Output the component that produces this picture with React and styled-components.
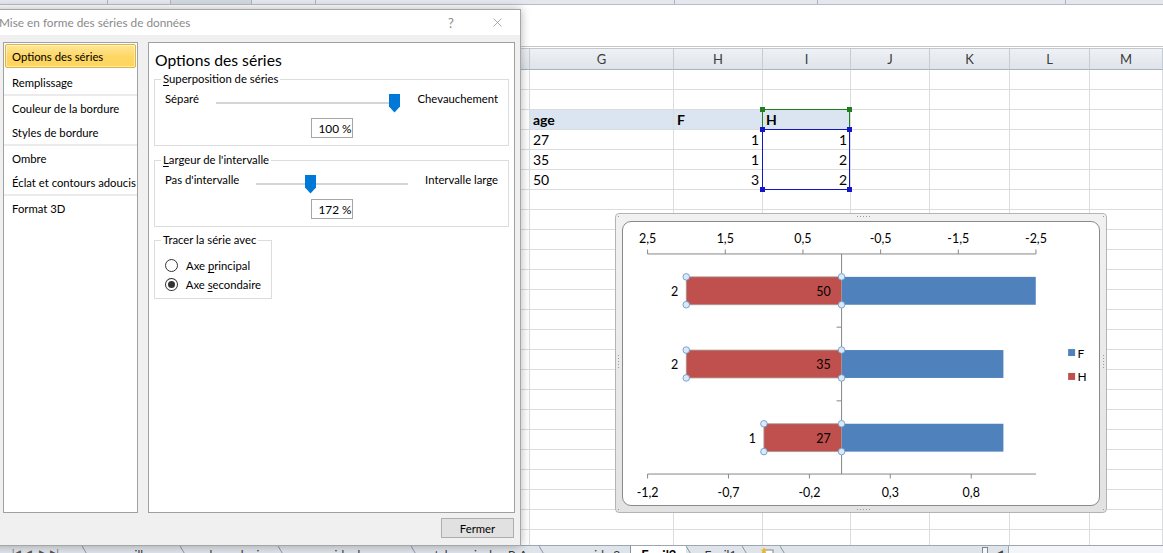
import React from "react";
import styled, { createGlobalStyle } from "styled-components";
import { X } from "lucide-react";

const UI = `Lato, "Noto Sans", sans-serif`;
const SHEET = `Lato, "Liberation Sans", sans-serif`;

const GlobalStyle = createGlobalStyle`
  * { box-sizing: border-box; }
  html, body { margin: 0; padding: 0; background: #fff; }
  body { width: 1163px; height: 553px; overflow: hidden; font-family: ${UI}; }
`;

const Screen = styled.div`
  position: relative;
  width: 1163px;
  height: 553px;
  overflow: hidden;
  background: #fff;
  display: flex;
  flex-direction: column;
`;

/* ---------- Excel window behind ---------- */
const RibbonStrip = styled.div`
  height: 5px;
  flex-shrink: 0;
  display: flex;
  background: #e4e8ed;
  border-bottom: 1px solid #b7bdc6;
`;
const RibbonSeg = styled.div`
  width: ${(p) => p.$w}px;
  flex-shrink: 0;
  border-right: 1px solid #aeb4bd;
  background: ${(p) => p.$bg || "transparent"};
`;
const FormulaBar = styled.div`
  height: 44px;
  flex-shrink: 0;
  background: #fff;
  border-bottom: 3px double #c4c8cd;
`;
const SheetArea = styled.div`
  height: 496px;
  flex-shrink: 0;
  overflow: hidden;
  display: grid;
  grid-template-columns: 530px 144px 89px 88px 79px 80px 80px 1fr;
  grid-template-rows: 21px;
  grid-auto-rows: 20px;
  font-family: ${SHEET};
`;
const HeadCell = styled.div`
  background: linear-gradient(#eef1f5, #dfe4ea);
  border-right: 1px solid #c6ccd4;
  border-bottom: 1px solid #a9b2bd;
  color: #3c3c3c;
  font-size: 13px;
  display: flex;
  align-items: center;
  justify-content: center;
`;
const Cell = styled.div`
  position: relative;
  border-right: 1px solid #dadcdf;
  border-bottom: 1px solid #dadcdf;
  background: ${(p) => (p.$fill ? "#dbe5f1" : "#fff")};
  font-size: 14px;
  font-weight: ${(p) => (p.$bold ? 700 : 400)};
  color: #000;
  display: flex;
  align-items: flex-end;
  justify-content: ${(p) => (p.$right ? "flex-end" : "flex-start")};
  padding: 0 3px 1px 3px;
  line-height: 17px;
`;
const RefBox = styled.div`
  position: absolute;
  left: -1px;
  top: -1px;
  right: 0;
  height: ${(p) => p.$h}px;
  border: 1px solid ${(p) => p.$c};
  z-index: 2;
`;
const RefHandle = styled.span`
  position: absolute;
  width: 5px;
  height: 5px;
  background: ${(p) => p.$c};
  ${(p) => (p.$t ? "top: -3px;" : "bottom: -3px;")}
  ${(p) => (p.$l ? "left: -3px;" : "right: -3px;")}
`;

/* ---------- sheet tabs ---------- */
const TabBar = styled.div`
  height: 20px;
  flex-shrink: 0;
  display: flex;
  align-items: flex-start;
  background: #dfe4ea;
  border-top: 1px solid #9ca6b2;
  font-family: ${UI};
  font-size: 12px;
  color: #333;
`;
const NavArrows = styled.div`
  width: 82px;
  flex-shrink: 0;
  display: flex;
  gap: 4px;
  padding: 1px 0 0 12px;
  font-size: 9px;
  color: #555;
`;
const Slash = styled.div`
  width: 12px;
  height: 20px;
  flex-shrink: 0;
  background: linear-gradient(to top right, transparent 46%, #8793a2 50%, transparent 54%);
`;
const Tab = styled.div`
  flex-shrink: 0;
  padding: 1px ${(p) => p.$px || 12}px 0;
  background: ${(p) => (p.$active ? "#fff" : "transparent")};
  font-weight: ${(p) => (p.$active ? 700 : 400)};
  font-size: ${(p) => (p.$active ? 13 : 12)}px;
  color: ${(p) => (p.$active ? "#000" : "#333")};
  border-left: ${(p) => (p.$active ? "1px solid #8793a2" : "none")};
`;
const TabFiller = styled.div`
  flex: 0 0 ${(p) => p.$w}px;
`;
const Splitter = styled.div`
  width: 6px;
  height: 14px;
  flex-shrink: 0;
  margin-top: 1px;
  border: 1px solid #7d8794;
  background: #f4f6f8;
`;
const ScrollArrow = styled.div`
  width: 20px;
  flex-shrink: 0;
  font-size: 9px;
  color: #444;
  padding: 1px 0 0 8px;
`;
const ScrollTrack = styled.div`
  flex: 1;
  height: 20px;
  background: #f3f5f8;
  border-left: 1px solid #9ca6b2;
  display: flex;
  justify-content: center;
  padding: 1px 0 0 330px;
  font-size: 8px;
  color: #777;
  letter-spacing: -1px;
`;

/* ---------- chart object ---------- */
const ChartObject = styled.div`
  position: absolute;
  left: 615px;
  top: 213px;
  width: 492px;
  height: 300px;
  padding: 7px 6px 6px 6px;
  display: flex;
  background: linear-gradient(#f1f1f1, #e2e2e2);
  border: 1px solid #b4b4b4;
  border-radius: 4px;
  z-index: 3;
`;
const ChartInner = styled.div`
  flex: 1;
  display: flex;
  background: #fff;
  border: 1px solid #8a8a8a;
  border-radius: 9px;
  overflow: hidden;
`;
const Grip = styled.span`
  position: absolute;
  ${(p) => p.$css}
  background: radial-gradient(circle, #9a9a9a 0.8px, transparent 1px);
  background-size: 3px 3px;
`;

/* ---------- dialog ---------- */
const Dialog = styled.div`
  position: absolute;
  left: -8px;
  top: 9px;
  width: 529px;
  height: 537px;
  display: flex;
  flex-direction: column;
  background: #f0f0f0;
  border: 1px solid #a6a6a6;
  box-shadow: 0 0 9px rgba(0, 0, 0, 0.3);
  font-family: ${UI};
  font-size: 11.3px;
  color: #000;
  z-index: 5;
`;
const TitleBar = styled.div`
  height: 25px;
  flex-shrink: 0;
  display: flex;
  align-items: center;
  background: #fff;
  padding-left: 6px;
  color: #8a8a8a;
  font-size: 11.8px;
`;
const TitleText = styled.span`
  flex: 1;
`;
const TitleBtn = styled.div`
  width: 46px;
  height: 25px;
  display: flex;
  align-items: center;
  justify-content: center;
  color: #8a8a8a;
  font-size: 13px;
`;
const Body = styled.div`
  flex-shrink: 0;
  display: grid;
  grid-template-columns: 135px 367px;
  column-gap: 10px;
  height: 478px;
  padding: 7px 5px 0 10px;
`;
const NavPanel = styled.div`
  background: #fff;
  border: 1px solid #a0a0a0;
  padding-top: 1px;
  display: flex;
  flex-direction: column;
`;
const NavGroup = styled.div`
  display: flex;
  flex-direction: column;
  border-bottom: ${(p) => (p.$last ? "none" : "2px solid #ebebeb")};
`;
const NavItem = styled.div`
  height: 24px;
  margin: 0 1px ${(p) => (p.$selected ? "2px" : "0")};
  padding-left: ${(p) => (p.$selected ? "6px" : "7px")};
  display: flex;
  align-items: center;
  white-space: nowrap;
  border: ${(p) => (p.$selected ? "1px solid #e2b13e" : "none")};
  border-radius: 2px;
  background: ${(p) =>
    p.$selected ? "linear-gradient(#fee798, #fdd663 55%, #fcd65f)" : "transparent"};
  box-shadow: ${(p) => (p.$selected ? "inset 0 0 0 1px rgba(255,255,255,0.5)" : "none")};
`;
const OptionsPanel = styled.div`
  background: #fff;
  border: 1px solid #a0a0a0;
  padding: 0 5px 0 5px;
  display: flex;
  flex-direction: column;
  align-items: flex-start;
`;
const Heading = styled.div`
  margin: 6px 0 0 1px;
  font-size: 15.7px;
  line-height: 22px;
`;
const Group = styled.fieldset`
  margin: ${(p) => p.$mt || 0}px 0 0 0;
  width: ${(p) => (p.$w ? `${p.$w}px` : "100%")};
  border: 1px solid #dcdcdc;
  padding: 0 10px ${(p) => p.$pb || 7}px 10px;
  display: flex;
  flex-direction: column;
  min-width: 0;
`;
const Legend = styled.legend`
  padding: 0 2px;
  margin-left: -4px;
  line-height: 16px;
  white-space: nowrap;
`;
const Key = styled.span`
  text-decoration: underline;
  text-underline-offset: 2px;
`;
const SliderRow = styled.div`
  margin-top: 4px;
  height: 16px;
  display: flex;
  align-items: center;
  line-height: 16px;
  white-space: nowrap;
`;
const Track = styled.div`
  position: relative;
  flex: 1;
  align-self: flex-start;
  margin: 11px 17px 0 17px;
  height: 2px;
  background: #d5d5d5;
`;
const Thumb = styled.svg`
  position: absolute;
  top: -8px;
  width: 11px;
  height: 19px;
`;
const ValueBox = styled.div`
  align-self: center;
  margin-top: 11px;
  width: 42px;
  height: 20px;
  border: 1px solid #a6a6a6;
  display: flex;
  align-items: center;
  padding-left: 7px;
  font-size: 11.8px;
`;
const RadioRow = styled.div`
  margin-top: ${(p) => p.$mt}px;
  height: 16px;
  display: flex;
  align-items: center;
  gap: 8px;
  white-space: nowrap;
`;
const RadioDot = styled.span`
  width: 13px;
  height: 13px;
  border-radius: 50%;
  border: 1px solid #333;
  display: flex;
  align-items: center;
  justify-content: center;
  background: #fff;
  &::after {
    content: "";
    width: 7px;
    height: 7px;
    border-radius: 50%;
    background: ${(p) => (p.$checked ? "#333" : "transparent")};
  }
`;
const Footer = styled.div`
  flex: 1;
  display: flex;
  justify-content: flex-end;
  align-items: flex-start;
  padding: 5px 6px 0 0;
`;
const Button = styled.div`
  width: 73px;
  height: 20px;
  background: #e1e1e1;
  border: 1px solid #adadad;
  display: flex;
  align-items: center;
  justify-content: center;
`;

/* ---------- data ---------- */
const COLS = ["", "G", "H", "I", "J", "K", "L", "M"];
const DATA = {
  2: [["age", false, true], ["F", false, true], ["H", false, true]],
  3: [["27"], ["1", true], ["1", true]],
  4: [["35"], ["1", true], ["2", true]],
  5: [["50"], ["3", true], ["2", true]],
};

const ZERO = 841.5;
const TOP_TICKS = [
  ["2,5", 646.7],
  ["1,5", 724.7],
  ["0,5", 802.7],
  ["-0,5", 880.7],
  ["-1,5", 958.7],
  ["-2,5", 1036.7],
];
const BOTTOM_TICKS = [
  ["-1,2", 646.7],
  ["-0,7", 727.9],
  ["-0,2", 809.2],
  ["0,3", 890.4],
  ["0,8", 971.7],
];
const BARS = [
  { age: "50", f: 3, h: 2, cy: 289.5 },
  { age: "35", f: 1, h: 2, cy: 363 },
  { age: "27", f: 1, h: 1, cy: 437 },
];

function Chart() {
  const font = { fontFamily: "Lato, 'Liberation Sans', sans-serif", fontSize: 12.5 };
  return (
    <svg width="478" height="285" viewBox="622 221 478 285">
      <line x1="646.7" y1="252.5" x2="1036.7" y2="252.5" stroke="#868686" />
      {TOP_TICKS.map(([t, x]) => (
        <g key={t}>
          <line x1={x} y1="248" x2={x} y2="252.5" stroke="#868686" />
          <text x={x} y="237" textAnchor="middle" dominantBaseline="central" {...font}>
            {t}
          </text>
        </g>
      ))}
      <line x1={ZERO} y1="252.5" x2={ZERO} y2="473.5" stroke="#868686" />
      {[326, 400].map((y) => (
        <line key={y} x1={ZERO - 5} y1={y} x2={ZERO} y2={y} stroke="#868686" />
      ))}
      {BARS.map((b) => {
        const blueEnd = Math.min(ZERO + b.f * 162.5, 1036.5);
        const redStart = ZERO - b.h * 78;
        const top = b.cy - 14;
        return (
          <g key={b.age}>
            <rect x={ZERO} y={top} width={blueEnd - ZERO} height="28" fill="#4f81bd" />
            <rect x={redStart} y={top} width={ZERO - redStart} height="28" fill="#c0504d" stroke="#a89c94" strokeWidth="0.8" />
            <text x={redStart - 8} y={b.cy + 1} textAnchor="end" dominantBaseline="central" {...font}>
              {b.h}
            </text>
            <text x={ZERO - 11} y={b.cy + 1} textAnchor="end" dominantBaseline="central" {...font}>
              {b.age}
            </text>
            {[
              [redStart, top],
              [redStart, top + 28],
              [ZERO, top],
              [ZERO, top + 28],
            ].map(([cx, cy], i) => (
              <circle key={i} cx={cx} cy={cy} r="3.3" fill="#dce8f5" stroke="#6d9ad0" strokeWidth="0.9" />
            ))}
          </g>
        );
      })}
      <line x1="646.7" y1="473.5" x2="1036.7" y2="473.5" stroke="#868686" />
      {BOTTOM_TICKS.map(([t, x]) => (
        <g key={t}>
          <line x1={x} y1="473.5" x2={x} y2="478" stroke="#868686" />
          <text x={x} y="492.5" textAnchor="middle" dominantBaseline="central" {...font}>
            {t}
          </text>
        </g>
      ))}
      <rect x="1069" y="348" width="7" height="7" fill="#4f81bd" />
      <text x="1078.5" y="352" dominantBaseline="central" {...font} fontSize="12">F</text>
      <rect x="1069" y="372" width="7" height="7" fill="#c0504d" />
      <text x="1078.5" y="376" dominantBaseline="central" {...font} fontSize="12">H</text>
    </svg>
  );
}

function ThumbShape({ frac }) {
  return (
    <Thumb viewBox="0 0 11 19" style={{ left: `calc(${frac} * (100% - 11px))` }}>
      <path d="M0 0 H11 V12.5 L5.5 18.5 L0 12.5 Z" fill="#0078d7" />
    </Thumb>
  );
}

export default function App() {
  const rows = Array.from({ length: 24 }, (_, i) => i);
  return (
    <Screen>
      <GlobalStyle />
      <RibbonStrip>
        <RibbonSeg $w={108} />
        <RibbonSeg $w={63} />
        <RibbonSeg $w={81} $bg="#d3d8df" />
        <RibbonSeg $w={64} />
        <RibbonSeg $w={359} />
        <RibbonSeg $w={143} />
        <RibbonSeg $w={248} />
      </RibbonStrip>
      <FormulaBar />
      <SheetArea>
        {COLS.map((c, i) => (
          <HeadCell key={`h${i}`}>{c}</HeadCell>
        ))}
        {rows.map((r) =>
          COLS.map((c, ci) => {
            const d = DATA[r] && ci >= 1 && ci <= 3 ? DATA[r][ci - 1] : null;
            return (
              <Cell key={`${r}-${ci}`} $fill={r === 2 && ci >= 1 && ci <= 3} $bold={d && d[2]} $right={d && d[1]}>
                {d ? d[0] : null}
                {r === 2 && ci === 3 && (
                  <RefBox $c="#1f7f1f" $h={21}>
                    <RefHandle $c="#1f7f1f" $t $l />
                    <RefHandle $c="#1f7f1f" $t />
                    <RefHandle $c="#1f7f1f" $l />
                    <RefHandle $c="#1f7f1f" />
                  </RefBox>
                )}
                {r === 3 && ci === 3 && (
                  <RefBox $c="#1414c8" $h={61}>
                    <RefHandle $c="#1414c8" $t $l />
                    <RefHandle $c="#1414c8" $t />
                    <RefHandle $c="#1414c8" $l />
                    <RefHandle $c="#1414c8" />
                  </RefBox>
                )}
              </Cell>
            );
          })
        )}
      </SheetArea>
      <TabBar>
        <NavArrows>
          <span>|◀</span>
          <span>◀</span>
          <span>&nbsp;▶</span>
          <span>▶|</span>
        </NavArrows>
        <Slash />
        <Tab>surveillance</Tab>
        <Slash />
        <Tab>chronologie</Tab>
        <Slash />
        <Tab>pyramide des ages</Tab>
        <Slash />
        <Tab>tab. crois dyn P-A</Tab>
        <Slash />
        <Tab $px={10}>pyramide 2</Tab>
        <Tab $active $px={10}>Feuil2</Tab>
        <Slash />
        <Tab $px={6}>Feuil1</Tab>
        <Slash />
        <Tab $px={6}>
          <svg width="14" height="12" viewBox="0 0 14 12">
            <rect x="4" y="3" width="9" height="9" fill="#fff" stroke="#7b8796" />
            <path d="M4 0 L5 2.5 L7.5 2.5 L5.5 4 L6.3 6.5 L4 5 L1.7 6.5 L2.5 4 L0.5 2.5 L3 2.5 Z" fill="#f2b31c" />
          </svg>
        </Tab>
        <Slash />
        <TabFiller $w={190} />
        <Splitter />
        <ScrollArrow>◀</ScrollArrow>
        <ScrollTrack>|||</ScrollTrack>
      </TabBar>

      <ChartObject>
        <Grip $css="left: 240px; top: 1px; width: 14px; height: 4px;" />
        <Grip $css="left: 240px; bottom: 0px; width: 14px; height: 4px;" />
        <Grip $css="left: 1px; top: 140px; width: 4px; height: 14px;" />
        <Grip $css="right: 0px; top: 140px; width: 4px; height: 14px;" />
        <Grip $css="left: 1px; top: 1px; width: 4px; height: 4px;" />
        <Grip $css="right: 0px; top: 1px; width: 4px; height: 4px;" />
        <Grip $css="left: 1px; bottom: 0px; width: 4px; height: 4px;" />
        <Grip $css="right: 0px; bottom: 0px; width: 4px; height: 4px;" />
        <ChartInner>
          <Chart />
        </ChartInner>
      </ChartObject>

      <Dialog>
        <TitleBar>
          <TitleText>Mise en forme des séries de données</TitleText>
          <TitleBtn>?</TitleBtn>
          <TitleBtn>
            <X size={15} strokeWidth={1} color="#7a7a7a" />
          </TitleBtn>
        </TitleBar>
        <Body>
          <NavPanel>
            <NavGroup>
              <NavItem $selected>Options des séries</NavItem>
              <NavItem>Remplissage</NavItem>
            </NavGroup>
            <NavGroup>
              <NavItem>Couleur de la bordure</NavItem>
              <NavItem>Styles de bordure</NavItem>
            </NavGroup>
            <NavGroup>
              <NavItem>Ombre</NavItem>
              <NavItem>Éclat et contours adoucis</NavItem>
            </NavGroup>
            <NavGroup $last>
              <NavItem>Format 3D</NavItem>
            </NavGroup>
          </NavPanel>
          <OptionsPanel>
            <Heading>Options des séries</Heading>
            <Group>
              <Legend>
                <Key>S</Key>uperposition de séries
              </Legend>
              <SliderRow>
                <span>Séparé</span>
                <Track>
                  <ThumbShape frac={1} />
                </Track>
                <span>Chevauchement</span>
              </SliderRow>
              <ValueBox>100 %</ValueBox>
            </Group>
            <Group $mt={6}>
              <Legend>
                <Key>L</Key>argeur de l'intervalle
              </Legend>
              <SliderRow>
                <span>Pas d'intervalle</span>
                <Track>
                  <ThumbShape frac={0.344} />
                </Track>
                <span>Intervalle large</span>
              </SliderRow>
              <ValueBox>172 %</ValueBox>
            </Group>
            <Group $mt={5} $w={118} $pb={6}>
              <Legend>Tracer la série avec</Legend>
              <RadioRow $mt={9}>
                <RadioDot />
                <span>
                  Axe <Key>p</Key>rincipal
                </span>
              </RadioRow>
              <RadioRow $mt={3}>
                <RadioDot $checked />
                <span>
                  Axe <Key>s</Key>econdaire
                </span>
              </RadioRow>
            </Group>
          </OptionsPanel>
        </Body>
        <Footer>
          <Button>Fermer</Button>
        </Footer>
      </Dialog>
    </Screen>
  );
}
